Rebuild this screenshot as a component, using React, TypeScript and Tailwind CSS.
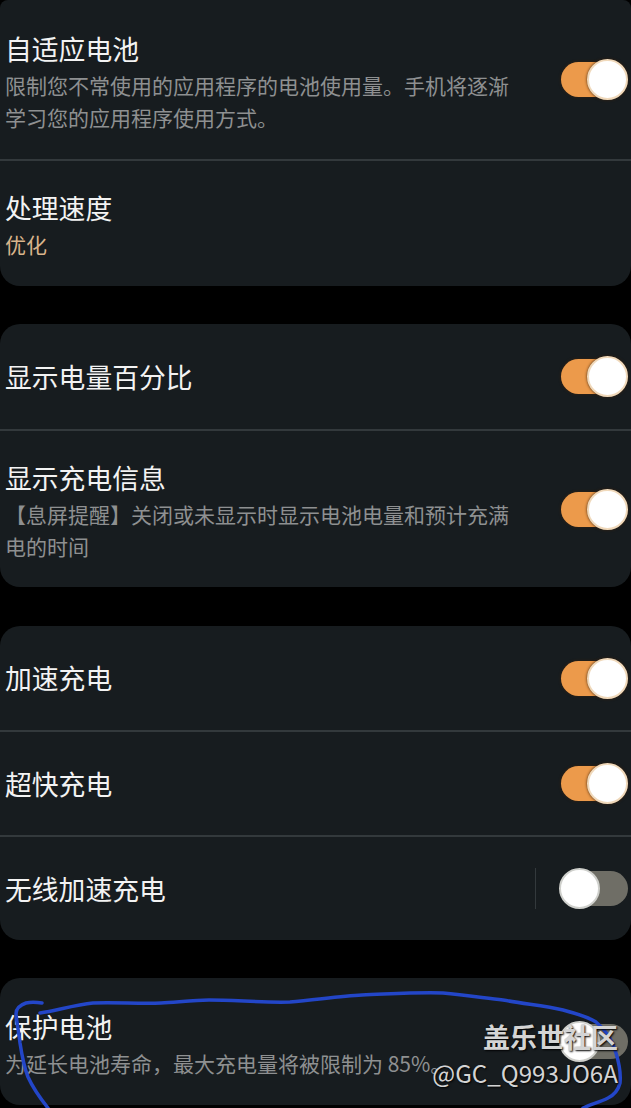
const FONT = "font-['Noto_Sans_CJK_SC','Noto_Sans',sans-serif]";

function Toggle({ on = true }: { on?: boolean }) {
  return (
    <div className="relative h-[41px] w-[68px] shrink-0">
      <div
        className={
          on
            ? "absolute left-[1px] right-[2px] top-[3px] h-[35px] rounded-full bg-[#ec9a4b] shadow-[0_0_3px_#3a230f]"
            : "absolute left-0 right-0 top-[3px] h-[35px] rounded-full bg-[#6f6e66]"
        }
      />
      <div
        className={
          on
            ? "absolute right-0 top-0 h-[41px] w-[41px] rounded-full border-2 border-[#f0d9bb] bg-white shadow-[0_0_3px_#3a230f]"
            : "absolute left-[-1px] top-0 h-[41px] w-[41px] rounded-full border-2 border-[#cfd0cc] bg-white"
        }
      />
    </div>
  );
}

function Row({
  title,
  sub,
  accent,
  on,
  sep,
  className,
}: {
  title: string;
  sub?: string[];
  accent?: string;
  on?: boolean;
  sep?: boolean;
  className: string;
}) {
  return (
    <div className={`flex items-center justify-between pl-[5px] pr-[3px] ${className}`}>
      <div className={sub ? "min-w-0 pt-[4px]" : accent ? "min-w-0 pt-[3px]" : "min-w-0"}>
        <div className="h-[36px] text-[26.8px] leading-[36px] text-[#f3f3f3]">{title}</div>
        {sub && (
          <div className="mt-[2px] text-[21px] leading-[32px] text-[#8e9091]">
            {sub.map((l) => (
              <div key={l}>{l}</div>
            ))}
          </div>
        )}
        {accent && <div className="mt-[2px] text-[21px] leading-[32px] text-[#d9b48c]">{accent}</div>}
      </div>
      {on !== undefined && (
        <div className="flex items-center">
          {sep && <div className="mr-[24px] h-[41px] w-px bg-[#33393c]" />}
          <Toggle on={on} />
        </div>
      )}
    </div>
  );
}

const Divider = () => <div className="h-[2px] bg-[#33393c]" />;

export default function App() {
  return (
    <div className={`relative h-[1108px] w-[631px] overflow-hidden bg-black ${FONT}`}>
      <div className="rounded-b-[20px] rounded-t-[8px] bg-[#171c1f]">
        <Row
          className="h-[159px]"
          title="自适应电池"
          sub={["限制您不常使用的应用程序的电池使用量。手机将逐渐", "学习您的应用程序使用方式。"]}
          on
        />
        <Divider />
        <Row className="h-[125px]" title="处理速度" accent="优化" />
      </div>

      <div className="mt-[38px] rounded-[20px] bg-[#171c1f]">
        <Row className="h-[105px]" title="显示电量百分比" on />
        <Divider />
        <Row
          className="h-[156px]"
          title="显示充电信息"
          sub={["【息屏提醒】关闭或未显示时显示电池电量和预计充满", "电的时间"]}
          on
        />
      </div>

      <div className="mt-[39px] rounded-[20px] bg-[#171c1f]">
        <Row className="h-[104px]" title="加速充电" on />
        <Divider />
        <Row className="h-[103px]" title="超快充电" on />
        <Divider />
        <Row className="h-[103px]" title="无线加速充电" on={false} sep />
      </div>

      <div className="mt-[38px] rounded-[20px] bg-[#171c1f]">
        <Row
          className="h-[127px]"
          title="保护电池"
          sub={["为延长电池寿命，最大充电量将被限制为 85%。"]}
          on={false}
        />
      </div>

      <svg className="absolute left-0 top-0 h-[1108px] w-[631px]" viewBox="0 0 631 1108" fill="none">
        <path
          d="M42 1003 C36 1002 30 1002 26 1003 C20 1005 16 1008 16 1014 C17 1024 19 1034 20 1043 C22 1056 24 1067 28 1077 C33 1088 40 1098 48 1108"
          stroke="#2346c8"
          strokeWidth="3.5"
          strokeLinecap="round"
        />
        <path
          d="M40 1013 C58 1010 75 1005 93 1003 C115 1002 140 1004 161 1003 C178 1002 195 1000 209 1000 C235 1000 265 1003 290 1002 C315 1000 340 996 362 995 C390 994 418 992 443 993 C465 995 485 998 503 1000 C525 1004 545 1006 563 1010 C578 1014 590 1018 596 1022 C606 1030 613 1042 616 1053 C619 1063 621 1074 620 1083 C618 1091 614 1095 608 1098 C600 1102 592 1104 583 1108"
          stroke="#2346c8"
          strokeWidth="3.5"
          strokeLinecap="round"
        />
      </svg>

      <div className="absolute right-[13px] top-[1018px] flex flex-col items-end text-[#d4d4d4] [text-shadow:1px_1px_2px_#000]">
        <div className="text-[27px] font-bold leading-[38px]">盖乐世社区</div>
        <div className="text-[24.2px] leading-[34px]">@GC_Q993JO6A</div>
      </div>
    </div>
  );
}
